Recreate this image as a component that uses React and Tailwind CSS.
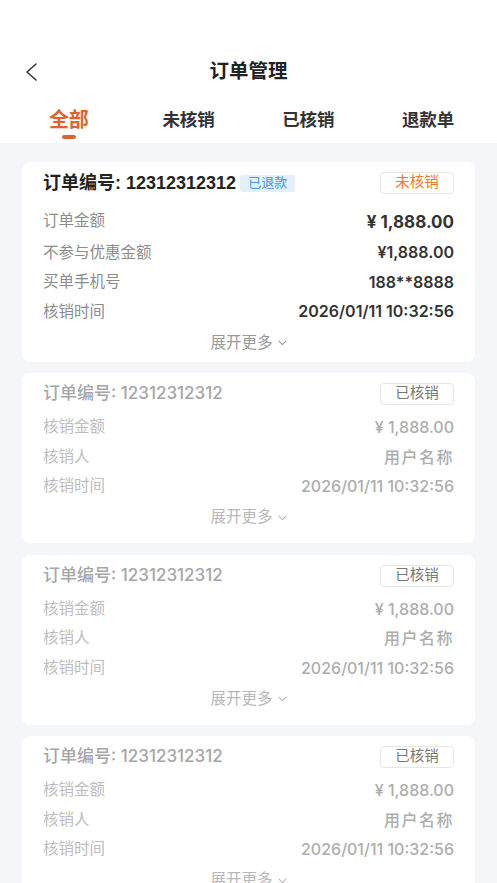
import React from "react";

const FONT = { fontFamily: '"Liberation Sans", "Noto Sans CJK SC", sans-serif' };
const NUM = { fontFamily: 'Inter, "Noto Sans CJK SC", sans-serif' };

function Chevron({ className }) {
  return (
    <svg width="9" height="6" viewBox="0 0 9 6" className={className} fill="none">
      <path d="M1 1.2 L4.5 4.6 L8 1.2" stroke="currentColor" strokeWidth="1.1" strokeLinecap="round" strokeLinejoin="round" />
    </svg>
  );
}

function Expand({ faded }) {
  return (
    <div className={`flex items-center justify-center h-[29.5px] mt-[1.5px] text-[15.5px] ${faded ? "text-[#b8b8b8]" : "text-[#9a9a9a]"}`}>
      <span>展开更多</span>
      <Chevron className="ml-[5px] mt-[1px]" />
    </div>
  );
}

function ActiveCard() {
  return (
    <div className="bg-white rounded-[8px] px-[21px] pt-[10px] pb-[4.5px]">
      <div className="flex items-center h-[22px]">
        <span className="text-[18px] font-bold text-[#222]">订单编号: 12312312312</span>
        <span className="ml-[4px] h-[17px] px-[8px] flex items-center rounded-[2px] bg-[#e3f0fc] text-[#4d93d9] text-[13px]">已退款</span>
        <div className="ml-auto w-[74px] h-[22px] border border-[#e6e6e6] rounded-[4px] flex items-center justify-center text-[14.5px] text-[#f5782a]">未核销</div>
      </div>
      <div className="mt-[7.5px] h-[36px] flex justify-between items-start pt-[7px]">
        <span className="text-[15.5px] text-[#8c8c8c]">订单金额</span>
        <span className="text-[17px] font-bold text-[#333] mt-[1px]" style={NUM}>¥ 1,888.00</span>
      </div>
      {[
        ["不参与优惠金额", "¥1,888.00"],
        ["买单手机号", "188**8888"],
        ["核销时间", "2026/01/11 10:32:56"],
      ].map(([l, v]) => (
        <div key={l} className="h-[29.5px] flex justify-between items-center">
          <span className="text-[15.5px] text-[#8c8c8c]">{l}</span>
          <span className="text-[16px] font-semibold text-[#333]" style={NUM}>{v}</span>
        </div>
      ))}
      <Expand />
    </div>
  );
}

function FadedCard() {
  return (
    <div className="bg-white rounded-[8px] px-[21px] pt-[10px] pb-[11.25px]">
      <div className="flex items-center h-[22px]">
        <span className="text-[17px] font-medium text-[#a6a6a6]" style={NUM}>订单编号: 12312312312</span>
        <div className="ml-auto w-[74px] h-[22px] border border-[#e6e6e6] rounded-[4px] flex items-center justify-center text-[14.5px] text-[#777]">已核销</div>
      </div>
      <div className="mt-[7.25px]">
        {[
          ["核销金额", "¥ 1,888.00"],
          ["核销人", "用户名称"],
          ["核销时间", "2026/01/11 10:32:56"],
        ].map(([l, v]) => (
          <div key={l} className="h-[29.5px] flex justify-between items-center">
            <span className="text-[15.5px] text-[#bdbdbd]">{l}</span>
            <span
              className={`text-[16px] font-medium text-[#adadad] ${v === "用户名称" ? "tracking-[1.5px] text-[16.5px]" : ""}`}
              style={NUM}
            >
              {v}
            </span>
          </div>
        ))}
      </div>
      <Expand faded />
    </div>
  );
}

export default function App() {
  const tabs = ["全部", "未核销", "已核销", "退款单"];
  return (
    <div className="w-[497px] h-[883px] overflow-hidden bg-[#f5f6f9]" style={FONT}>
      <div className="bg-white pt-[52px] pb-[4px]">
        <div className="relative h-[40px] flex items-center justify-center">
          <svg className="absolute left-[24px] top-[10px]" width="14" height="20" viewBox="0 0 14 20" fill="none">
            <path d="M12 2 L3 10 L12 18" stroke="#333" strokeWidth="1.5" strokeLinecap="round" strokeLinejoin="round" />
          </svg>
          <span className="text-[19.5px] font-semibold text-[#222]">订单管理</span>
        </div>
        <div className="mt-[14px] px-[9px] grid grid-cols-4">
          {tabs.map((t, i) => (
            <div key={t} className="flex flex-col items-center">
              <span
                className={
                  i === 0
                    ? "h-[28px] leading-[28px] text-[20px] font-bold text-[#e2622a]"
                    : "h-[28px] leading-[28px] text-[17.5px] font-semibold text-[#333]"
                }
              >
                {t}
              </span>
              <div className={`mt-[1px] h-[4px] w-[14px] rounded-full ${i === 0 ? "bg-[#e2622a]" : "bg-transparent"}`} />
            </div>
          ))}
        </div>
      </div>
      <div className="px-[22px] pt-[19px] flex flex-col gap-[11.5px]">
        <ActiveCard />
        <FadedCard />
        <FadedCard />
        <FadedCard />
      </div>
    </div>
  );
}
